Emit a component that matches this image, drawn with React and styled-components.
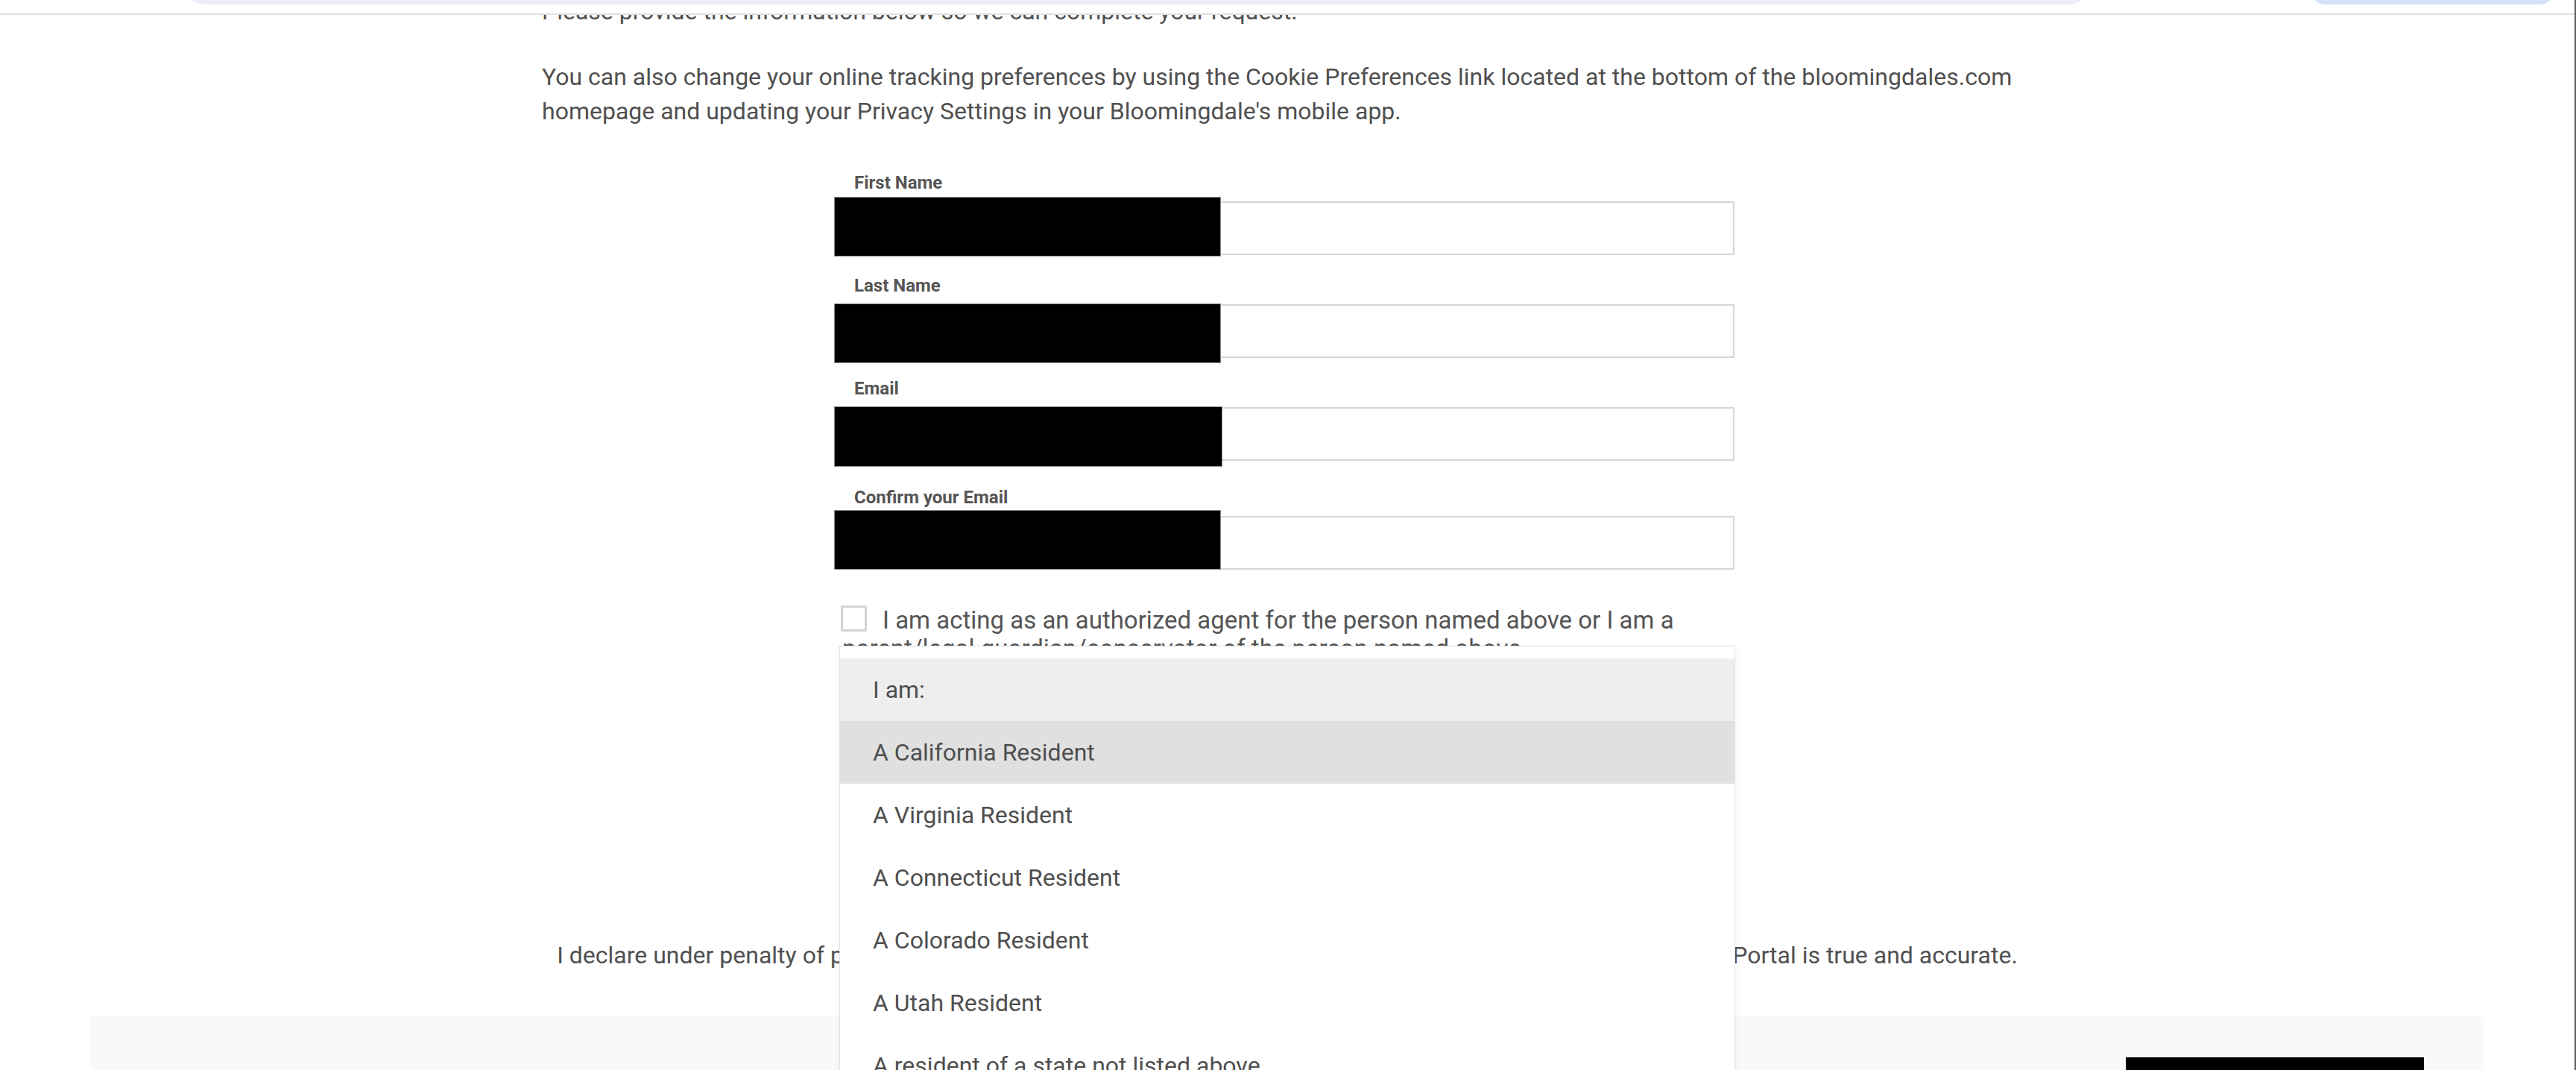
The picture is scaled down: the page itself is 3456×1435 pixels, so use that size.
import React from "react";
import styled, { createGlobalStyle } from "styled-components";

const GlobalStyle = createGlobalStyle`
  html, body {
    margin: 0;
    padding: 0;
    height: 100%;
    overflow: hidden;
    background: #fff;
  }
  body {
    font-family: Roboto, "Liberation Sans", Arial, sans-serif;
    color: #505050;
  }
  #root {
    height: 100%;
  }
`;

const fields = [
  { label: "First Name", top: -5, height: 78, width: 517, gap: 28 },
  { label: "Last Name", top: 0, height: 78, width: 517, gap: 28 },
  { label: "Email", top: 0, height: 79, width: 519, gap: 36 },
  { label: "Confirm your Email", top: -7, height: 78, width: 517, gap: 0 },
];

const options = [
  { text: "I am:", tone: "#eeeeee" },
  { text: "A California Resident", tone: "#e0e0e0" },
  { text: "A Virginia Resident" },
  { text: "A Connecticut Resident" },
  { text: "A Colorado Resident" },
  { text: "A Utah Resident" },
  { text: "A resident of a state not listed above" },
];

const App = () => {
  return (
    <>
      <GlobalStyle />
      <Page>
        <TopBar>
          <SearchPill />
          <ActionPill />
        </TopBar>
        <Viewport>
          <Content>
            <Container>
              <Text>
                Please provide the information below so we can complete your
                request.
              </Text>
              <Text>
                You can also change your online tracking preferences by using
                the Cookie Preferences link located at the bottom of the
                bloomingdales.com homepage and updating your Privacy Settings in
                your Bloomingdale's mobile app.
              </Text>
              <Form>
                {fields.map((f) => (
                  <Field key={f.label} $gap={f.gap}>
                    <Label>{f.label}</Label>
                    <InputWrap>
                      <Input type="text" />
                      <Redaction
                        $top={f.top}
                        $height={f.height}
                        $width={f.width}
                      />
                    </InputWrap>
                  </Field>
                ))}
                <CheckLabel>
                  <CheckBox />I am acting as an authorized agent for the person
                  named above or I am a parent/legal guardian/conservator of the
                  person named above.
                </CheckLabel>
                <OptionList>
                  {options.map((o) => (
                    <Option key={o.text} $tone={o.tone}>
                      {o.text}
                    </Option>
                  ))}
                </OptionList>
              </Form>
              <Declaration>
                I declare under penalty of perjury that all of the information I
                have provided through this Bloomingdale's Privacy Portal is true
                and accurate.
              </Declaration>
            </Container>
            <Footer>
              <SubmitBlock />
            </Footer>
          </Content>
        </Viewport>
      </Page>
    </>
  );
};

const Page = styled.div`
  height: 100vh;
  display: flex;
  flex-direction: column;
  border-right: 2px solid #5f5f5f;
  box-sizing: border-box;
`;

const TopBar = styled.header`
  flex: none;
  height: 18px;
  border-bottom: 2px solid #e0e0e0;
  display: flex;
  align-items: flex-start;
  padding-left: 253px;
  gap: 302px;
  overflow: hidden;
  background: #fff;
`;

const SearchPill = styled.div`
  width: 2545px;
  height: 40px;
  margin-top: -34px;
  border-radius: 20px;
  background: #eceff7;
`;

const ActionPill = styled.div`
  width: 327px;
  height: 40px;
  margin-top: -34px;
  border-radius: 20px;
  background: #d6e2fb;
`;

const Viewport = styled.main`
  flex: 1;
  overflow: hidden;
`;

const Content = styled.div`
  margin-top: -28px;
`;

const Container = styled.div`
  max-width: 2000px;
  margin: 0 auto;
`;

const Text = styled.p`
  margin: 0 0 42px;
  font-size: 32px;
  line-height: 46px;
  color: #505050;
`;

const Form = styled.form`
  position: relative;
  width: 1206px;
  margin: 60px 0 0 394px;
`;

const Field = styled.div`
  margin-bottom: ${(p) => p.$gap}px;
`;

const Label = styled.div`
  padding-left: 25px;
  margin-bottom: 12px;
  font-size: 24px;
  line-height: 26px;
  font-weight: 700;
  color: #555;
`;

const InputWrap = styled.div`
  position: relative;
`;

const Input = styled.input`
  display: block;
  width: 100%;
  height: 72px;
  box-sizing: border-box;
  border: 2px solid #d6d6d6;
  border-radius: 0;
  background: #fff;
  outline: none;
`;

const Redaction = styled.div`
  position: absolute;
  left: -1px;
  top: ${(p) => p.$top}px;
  width: ${(p) => p.$width}px;
  height: ${(p) => p.$height}px;
  background: #000;
  box-shadow: 0 0 0 1px #8a8a8a;
`;

const CheckLabel = styled.label`
  display: block;
  margin-top: 48px;
  padding-left: 9px;
  font-size: 33px;
  line-height: 38px;
  color: #555;
`;

const CheckBox = styled.span`
  display: inline-block;
  width: 35px;
  height: 35px;
  box-sizing: border-box;
  border: 3px solid #d3d3d3;
  border-radius: 2px;
  background: #fff;
  vertical-align: -4px;
  margin: 0 21px 0 -2px;
`;

const OptionList = styled.div`
  position: absolute;
  top: 635px;
  left: 6px;
  width: 1200px;
  padding-top: 16px;
  background: #fff;
  box-shadow: 0 0 0 1px #e3e3e3, 0 2px 8px rgba(0, 0, 0, 0.08);
  z-index: 2;
`;

const Option = styled.div`
  height: 84px;
  display: flex;
  align-items: center;
  padding-left: 44px;
  font-size: 32px;
  color: #4f4f4f;
  background: ${(p) => p.$tone || "#fff"};
`;

const Declaration = styled.p`
  margin: 369px 0 0;
  text-align: center;
  font-size: 32px;
  line-height: 46px;
  color: #505050;
`;

const Footer = styled.footer`
  width: 3210px;
  margin: 59px auto 0;
  padding: 55px 80px 40px;
  box-sizing: border-box;
  display: flex;
  justify-content: flex-end;
  background: #f9f9f9;
`;

const SubmitBlock = styled.div`
  width: 400px;
  height: 80px;
  background: #000;
`;

export default App;
